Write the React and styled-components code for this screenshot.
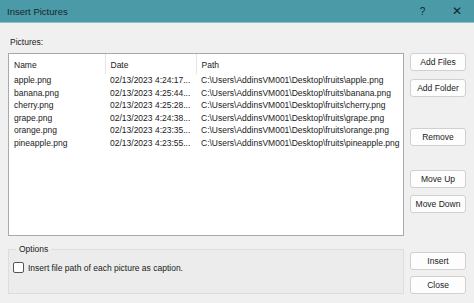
import React from 'react';
import styled, { createGlobalStyle } from 'styled-components';

const GlobalStyle = createGlobalStyle`
  html, body {
    margin: 0;
    padding: 0;
    background: #f0f0f0;
  }
  body {
    font-family: "Liberation Sans", Arial, sans-serif;
    font-size: 8.5px;
    color: #1a1a1a;
  }
`;

const Window = styled.div`
  width: 474px;
  height: 303px;
  background: #f0f0f0;
  display: flex;
  flex-direction: column;
  overflow: hidden;
`;

const TitleBar = styled.div`
  flex-shrink: 0;
  height: 23px;
  box-sizing: border-box;
  background: #4a9aa7;
  color: #16262c;
  display: flex;
  align-items: center;
  padding: 0 0 0 7px;
  font-size: 9.5px;
  border-bottom: 1px solid #8ec3cb;
`;

const TitleText = styled.div`
  flex: 1;
`;

const TitleButton = styled.div`
  width: ${(p) => p.$width || 34}px;
  text-align: center;
  font-size: ${(p) => p.$size || 12}px;
`;

const Body = styled.div`
  flex: 1;
  min-height: 0;
  display: grid;
  grid-template-columns: 396px 56px;
  column-gap: 6px;
  padding: 0 0 0 8px;
`;

const LeftColumn = styled.div`
  display: flex;
  flex-direction: column;
`;

const Label = styled.div`
  height: 30px;
  line-height: 12px;
  padding: 13px 0 0 2px;
  box-sizing: border-box;
`;

const ListBox = styled.div`
  height: 183px;
  flex-shrink: 0;
  background: #fff;
  border: 1px solid #a9a9a9;
  box-sizing: border-box;
`;

const Table = styled.table`
  border-collapse: collapse;
  table-layout: fixed;
  width: 100%;
`;

const HeadCell = styled.th`
  font-weight: normal;
  text-align: left;
  height: 18px;
  padding: 2px 0 0 5px;
  border-right: 1px solid ${(p) => (p.$last ? 'transparent' : '#e5e5e5')};
  white-space: nowrap;
`;

const Cell = styled.td`
  height: 12.6px;
  padding: 0 0 0 5px;
  line-height: 12.6px;
  white-space: nowrap;
  overflow: hidden;
`;

const Fieldset = styled.fieldset`
  margin: 8px 0 0 0;
  padding: 8px 4px 0 4px;
  height: 50px;
  box-sizing: border-box;
  border: 1px solid #dddddd;
  background: #ececec;
`;

const Legend = styled.legend`
  padding: 0 3px;
  margin-left: 3px;
`;

const CheckRow = styled.label`
  display: flex;
  align-items: center;
  gap: 4px;
`;

const CheckBox = styled.span`
  width: 9px;
  height: 9px;
  border: 1px solid #555;
  border-radius: 2px;
  background: #fff;
`;

const ButtonColumn = styled.div`
  display: flex;
  flex-direction: column;
  padding-top: 30px;
`;

const Button = styled.div`
  height: 18px;
  flex-shrink: 0;
  box-sizing: border-box;
  border: 1px solid #d0d0d0;
  border-radius: 3px;
  background: #fdfdfd;
  display: flex;
  align-items: center;
  justify-content: center;
  margin-top: ${(p) => p.$gap || 0}px;
  white-space: nowrap;
`;

const files = [
  ['apple.png', '02/13/2023 4:24:17...'],
  ['banana.png', '02/13/2023 4:25:44...'],
  ['cherry.png', '02/13/2023 4:25:28...'],
  ['grape.png', '02/13/2023 4:24:38...'],
  ['orange.png', '02/13/2023 4:23:35...'],
  ['pineapple.png', '02/13/2023 4:23:55...'],
];

export default function App() {
  return (
    <>
      <GlobalStyle />
      <Window>
        <TitleBar>
          <TitleText>Insert Pictures</TitleText>
          <TitleButton $size={10} $width={35}>?</TitleButton>
          <TitleButton $size={12} $width={34}>✕</TitleButton>
        </TitleBar>
        <Body>
          <LeftColumn>
            <Label>Pictures:</Label>
            <ListBox>
              <Table>
                <colgroup>
                  <col style={{ width: 96 }} />
                  <col style={{ width: 91 }} />
                  <col />
                </colgroup>
                <thead>
                  <tr>
                    <HeadCell>Name</HeadCell>
                    <HeadCell>Date</HeadCell>
                    <HeadCell $last>Path</HeadCell>
                  </tr>
                </thead>
                <tbody>
                  {files.map(([name, date]) => (
                    <tr key={name}>
                      <Cell>{name}</Cell>
                      <Cell>{date}</Cell>
                      <Cell>{'C:\\Users\\AddinsVM001\\Desktop\\fruits\\' + name}</Cell>
                    </tr>
                  ))}
                </tbody>
              </Table>
            </ListBox>
            <Fieldset>
              <Legend>Options</Legend>
              <CheckRow>
                <CheckBox />
                Insert file path of each picture as caption.
              </CheckRow>
            </Fieldset>
          </LeftColumn>
          <ButtonColumn>
            <Button>Add Files</Button>
            <Button $gap={8}>Add Folder</Button>
            <Button $gap={31}>Remove</Button>
            <Button $gap={24}>Move Up</Button>
            <Button $gap={7}>Move Down</Button>
            <Button $gap={39}>Insert</Button>
            <Button $gap={6}>Close</Button>
          </ButtonColumn>
        </Body>
      </Window>
    </>
  );
}
